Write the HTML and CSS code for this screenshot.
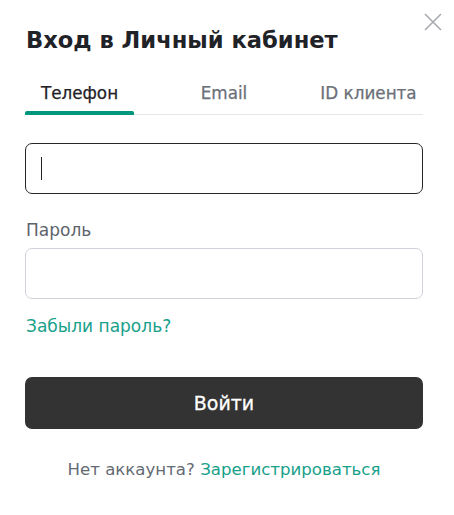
FILE: index.html
```html
<!DOCTYPE html>
<html lang="ru">
<head>
<meta charset="utf-8">
<title>Вход в Личный кабинет</title>
<link rel="stylesheet" href="styles.css">
</head>
<body>
<div class="dialog">
  <button class="close" aria-label="Закрыть">
    <svg width="18" height="18" viewBox="0 0 18 18"><path d="M1 1L17 17M17 1L1 17" stroke="#a7aaaf" stroke-width="1.6" fill="none"/></svg>
  </button>
  <h1 class="title">Вход в Личный кабинет</h1>
  <div class="tabs">
    <div class="tab tab-phone active">Телефон</div>
    <div class="tab tab-email">Email</div>
    <div class="tab tab-id">ID клиента</div>
  </div>
  <div class="field field-focus"><span class="caret"></span></div>
  <div class="label">Пароль</div>
  <div class="field"></div>
  <a class="forgot" href="#">Забыли пароль?</a>
  <button class="submit">Войти</button>
  <p class="signup">Нет аккаунта? <a href="#">Зарегистрироваться</a></p>
</div>
</body>
</html>
```
FILE: styles.css
```css
* { box-sizing: border-box; }
html, body { margin: 0; background: #fff; }
body { font-family: "DejaVu Sans", "Noto Sans", sans-serif; color: #1f2227; }
.dialog { position: relative; width: 454px; height: 515px; padding: 24px 31px 0 25px; }
.close { position: absolute; top: 13px; right: 12px; width: 18px; height: 18px; padding: 0; border: 0; background: none; }
.close svg { display: block; }
.title { margin: 0 0 0 1px; font-size: 22.6px; line-height: 32px; font-weight: 700; color: #1f2227; white-space: nowrap; }
.tabs { display: flex; gap: 50px; margin-top: 27px; border-bottom: 1px solid #e6e7ea; }
.tab { position: relative; text-align: center; font-size: 16.8px; line-height: 20px; padding-bottom: 11px; color: #6b7079; white-space: nowrap; -webkit-text-stroke: 0.25px currentColor; }
.tab-phone { width: 109px; }
.tab-email { width: 80px; }
.tab-id { width: 109px; }
.tab.active { color: #1f2227; }
.tab.active::after { content: ""; position: absolute; left: 0; right: 0; bottom: -1px; height: 4px; background: #00967d; border-radius: 2px 2px 0 0; }
.field { height: 51px; border: 1px solid #d0d4da; border-radius: 7px; }
.field-focus { margin-top: 28px; border-color: #25272b; padding: 13px 15px; }
.caret { display: block; width: 1px; height: 23px; background: #1f2227; }
.label { margin: 26px 0 8px 1px; font-size: 17px; line-height: 20px; color: #5e636c; }
.forgot { display: block; margin: 17px 0 0 1px; font-size: 17px; line-height: 20px; color: #17a08a; text-decoration: none; }
.submit { display: block; width: 100%; height: 52px; margin-top: 41px; border: 0; border-radius: 7px; background: #333333; color: #fff; font-family: inherit; font-size: 19px; -webkit-text-stroke: 0.3px #fff; }
.signup { margin: 31px 0 0; text-align: center; font-size: 16.6px; line-height: 20px; color: #646a73; }
.signup a { color: #17a08a; text-decoration: none; }
```
